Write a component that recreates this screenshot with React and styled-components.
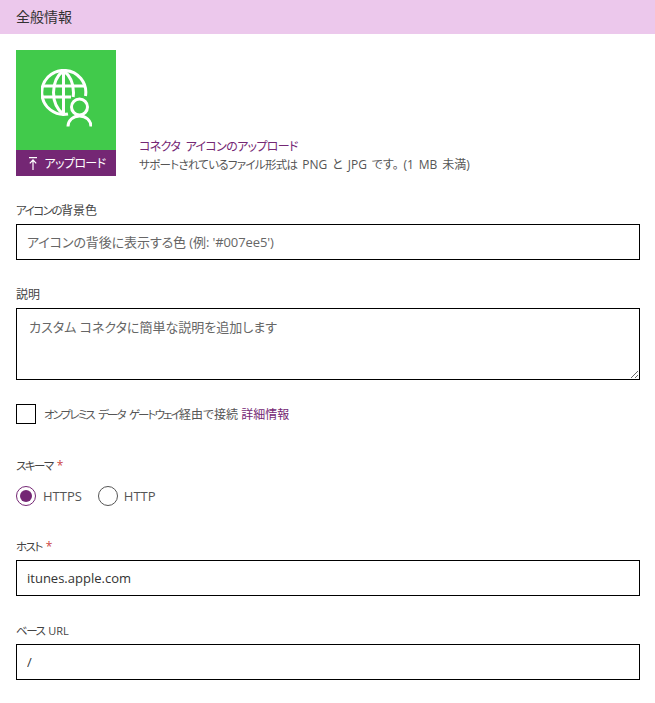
import React from "react";
import styled, { createGlobalStyle } from "styled-components";

const GlobalStyle = createGlobalStyle`
  html, body { margin: 0; padding: 0; background: #fff; }
  body {
    font-family: "Open Sans", "Noto Sans CJK JP", sans-serif;
    font-feature-settings: "palt";
    color: #333;
  }
`;

const Page = styled.div`
  width: 655px;
  height: 703px;
  overflow: hidden;
`;
const Header = styled.div`
  height: 34px;
  line-height: 34px;
  padding-left: 16px;
  background: #ecc8ec;
  font-size: 14px;
  color: #333;
`;
const Body = styled.div`
  padding: 16px 15px 0 16px;
`;
const UploadRow = styled.div`
  display: flex;
  align-items: flex-end;
  gap: 23px;
  height: 126px;
`;
const IconBox = styled.div`
  width: 100px;
  display: flex;
  flex-direction: column;
`;
const IconTile = styled.div`
  height: 100px;
  background: #41ca4b;
  display: flex;
  align-items: center;
  justify-content: center;
  padding-bottom: 4px;
  box-sizing: border-box;
`;
const UploadBar = styled.div`
  height: 26px;
  box-sizing: border-box;
  padding-left: 3px;
  background: #742774;
  color: #fff;
  font-size: 12px;
  letter-spacing: -0.6px;
  display: flex;
  align-items: center;
  justify-content: center;
  gap: 7px;
`;
const UploadInfo = styled.div`
  display: flex;
  flex-direction: column;
  font-size: 12px;
  line-height: 18px;
  padding-bottom: 2px;
`;
const LinkText = styled.a`
  color: #742774;
  letter-spacing: ${(p) => p.$spacing || 0}px;
  word-spacing: ${(p) => (p.$spacing ? 3 : 0)}px;
`;
const Hint = styled.span`
  color: #555;
  word-spacing: 1.8px;
`;
const Kana = styled.span`
  font-size: 11.5px;
  letter-spacing: ${(p) => p.$spacing ?? -1.5}px;
  word-spacing: 3px;
`;
const Field = styled.div`
  margin-top: ${(p) => p.$top}px;
`;
const Label = styled.div`
  box-sizing: border-box;
  font-size: 12px;
  line-height: 16px;
  height: 16px;
  margin-bottom: ${(p) => p.$gap || 6}px;
  padding-top: 1px;
  color: #444;
`;
const UrlPart = styled.span`
  font-size: 11px;
  margin-left: 1px;
`;
const Required = styled.span`
  color: #c44;
  margin-left: 4px;
`;
const TextInput = styled.input`
  display: block;
  box-sizing: border-box;
  width: 624px;
  height: 36px;
  border: 1px solid #000;
  padding: 0 10px;
  font: 13px "Open Sans", "Noto Sans CJK JP", sans-serif;
  font-feature-settings: "palt";
  color: #333;
  outline: none;
  &::placeholder { color: #666; opacity: 1; letter-spacing: -0.1px; }
`;
const TextArea = styled.textarea`
  display: block;
  box-sizing: border-box;
  width: 624px;
  height: 72px;
  border: 1px solid #000;
  padding: 8px 12px;
  font: 13px "Open Sans", "Noto Sans CJK JP", sans-serif;
  font-feature-settings: "palt";
  outline: none;
  &::placeholder { color: #666; opacity: 1; }
`;
const CheckRow = styled.div`
  display: flex;
  align-items: center;
  gap: 8px;
  margin-top: 24px;
  font-size: 12px;
  color: #555;
`;
const CheckBox = styled.span`
  box-sizing: border-box;
  width: 20px;
  height: 20px;
  border: 1px solid #000;
`;
const RadioRow = styled.div`
  display: flex;
  align-items: center;
  height: 20px;
  font-size: 13px;
  color: #555;
`;
const Radio = styled.span`
  box-sizing: border-box;
  width: 20px;
  height: 20px;
  border-radius: 50%;
  border: 1px solid ${(p) => (p.$on ? "#742774" : "#555")};
  display: flex;
  align-items: center;
  justify-content: center;
  margin-right: ${(p) => (p.$on ? 7 : 6)}px;
  &::after {
    content: "";
    width: 12px;
    height: 12px;
    border-radius: 50%;
    background: ${(p) => (p.$on ? "#742774" : "transparent")};
  }
`;
const RadioText = styled.span`
  margin-right: 16px;
`;

function GlobeUserIcon() {
  return (
    <svg width="51" height="58" viewBox="0 0 51 58" fill="none" stroke="#fff" strokeWidth="3">
      <path d="M44.500 27A22 22 0 1 0 27 45" />
      <path d="M22.500 1.500C15.500 7 12.500 15 12.500 23.500S15.500 40 22.500 45.500" />
      <path d="M22.500 1.500C29.500 7 32.500 15 32.500 23.500c0 2-.2 3-.4 4.500" />
      <path d="M22.500 1.500V45.500" />
      <path d="M2 17h41M1 28h29" />
      <circle cx="38.500" cy="38" r="8" />
      <path d="M27 57.500c0-6 5-10.500 11.500-10.500S50 51.500 50 57.500" />
    </svg>
  );
}

function UploadArrow() {
  return (
    <svg width="8" height="13" viewBox="0 0 8 13" fill="none" stroke="#fff" strokeWidth="1.200">
      <path d="M0 .7h8M4 13V3M.8 6.400L4 3l3.200 3.400" />
    </svg>
  );
}

export default function App() {
  return (
    <Page>
      <GlobalStyle />
      <Header>全般情報</Header>
      <Body>
        <UploadRow>
          <IconBox>
            <IconTile>
              <GlobeUserIcon />
            </IconTile>
            <UploadBar>
              <UploadArrow />
              アップロード
            </UploadBar>
          </IconBox>
          <UploadInfo>
            <LinkText $spacing={-0.65}>コネクタ アイコンのアップロード</LinkText>
            <Hint>
              <Kana $spacing={-0.7}>サポートされているファイル形式は</Kana> PNG と JPG です。 (1 MB 未満)
            </Hint>
          </UploadInfo>
        </UploadRow>
        <Field $top={26}>
          <Label>
            <Kana>アイコンの</Kana>背景色
          </Label>
          <TextInput placeholder="アイコンの背後に表示する色 (例: '#007ee5')" />
        </Field>
        <Field $top={26}>
          <Label>説明</Label>
          <TextArea placeholder="カスタム コネクタに簡単な説明を追加します" />
        </Field>
        <CheckRow>
          <CheckBox />
          <span>
            <Kana $spacing={-1.85}>オンプレミス データ ゲートウェイ</Kana>経由で接続 <LinkText>詳細情報</LinkText>
          </span>
        </CheckRow>
        <Field $top={33}>
          <Label $gap={13}>
            <Kana>スキーマ</Kana>
            <Required>*</Required>
          </Label>
          <RadioRow>
            <Radio $on />
            <RadioText>HTTPS</RadioText>
            <Radio />
            <RadioText>HTTP</RadioText>
          </RadioRow>
        </Field>
        <Field $top={32}>
          <Label>
            <Kana>ホスト</Kana>
            <Required>*</Required>
          </Label>
          <TextInput defaultValue="itunes.apple.com" />
        </Field>
        <Field $top={26}>
          <Label>
            <Kana>ベース</Kana>
            <UrlPart> URL</UrlPart>
          </Label>
          <TextInput defaultValue="/" />
        </Field>
      </Body>
    </Page>
  );
}
